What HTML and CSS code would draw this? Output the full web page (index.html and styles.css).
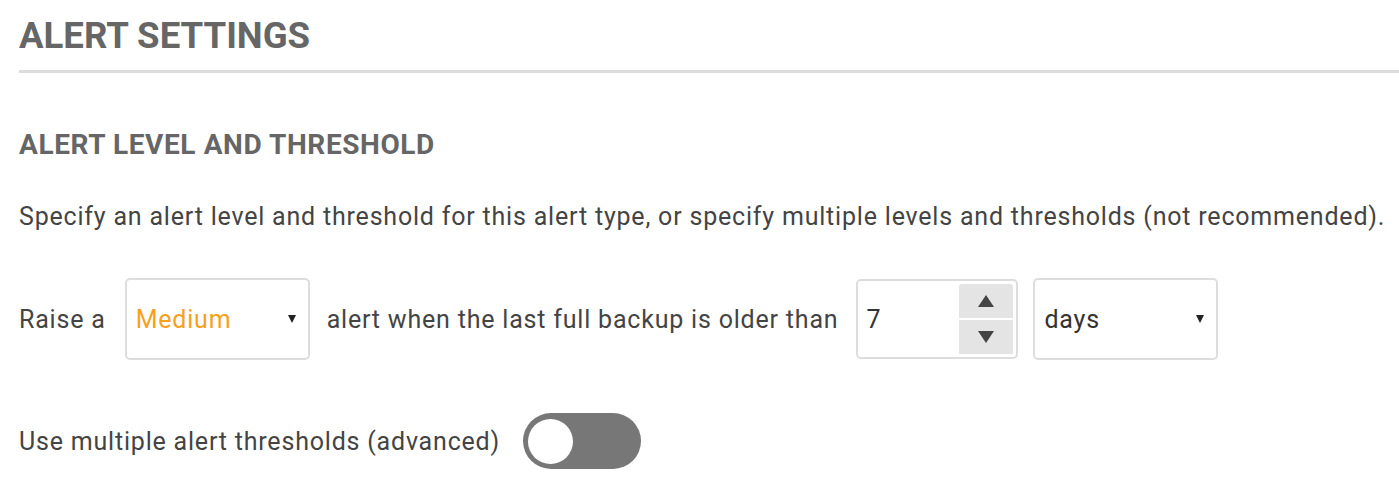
FILE: index.html
```html
<!DOCTYPE html>
<html lang="en">
<head>
<meta charset="utf-8">
<title>Alert Settings</title>
<link rel="stylesheet" href="styles.css">
</head>
<body>
<div class="page">
  <h1 class="title">ALERT SETTINGS</h1>
  <div class="rule"></div>
  <h2 class="subtitle">ALERT LEVEL AND THRESHOLD</h2>
  <p class="desc">Specify an alert level and threshold for this alert type, or specify multiple levels and thresholds (not recommended).</p>
  <div class="row">
    <span class="label">Raise a</span>
    <div class="select select-level">
      <span class="select-value medium">Medium</span>
      <span class="caret"></span>
    </div>
    <span class="label">alert when the last full backup is older than</span>
    <div class="number">
      <span class="number-value">7</span>
      <div class="spinner">
        <div class="spin-btn"><span class="tri-up"></span></div>
        <div class="spin-btn"><span class="tri-down"></span></div>
      </div>
    </div>
    <div class="select select-unit">
      <span class="select-value">days</span>
      <span class="caret"></span>
    </div>
  </div>
  <div class="toggle-row">
    <span class="label">Use multiple alert thresholds (advanced)</span>
    <div class="toggle"><span class="knob"></span></div>
  </div>
</div>
</body>
</html>
```
FILE: styles.css
```css
html, body {
  margin: 0;
  padding: 0;
  background: #ffffff;
}
body {
  font-family: Roboto, "Liberation Sans", Arial, sans-serif;
  color: #444444;
}
.page {
  padding-left: 19px;
}
.title {
  margin: 17px 0 0 0;
  font-size: 36.6px;
  line-height: 38px;
  font-weight: 700;
  color: #666666;
}
.rule {
  margin-top: 15px;
  height: 3px;
  background: #dddddd;
}
.subtitle {
  margin: 58px 0 0 0;
  font-size: 28px;
  line-height: 28px;
  font-weight: 700;
  letter-spacing: 0.6px;
  color: #666666;
}
.desc {
  margin: 45px 0 0 0;
  font-size: 25px;
  line-height: 25px;
  letter-spacing: 0.8px;
  color: #444444;
}
.row {
  margin-top: 49px;
  display: flex;
  align-items: center;
  height: 82px;
}
.label {
  font-size: 25px;
  line-height: 25px;
  letter-spacing: 0.8px;
  color: #444444;
  white-space: nowrap;
}
.select {
  box-sizing: border-box;
  height: 82px;
  width: 185px;
  border: 2px solid #dddddd;
  border-radius: 5px;
  display: flex;
  align-items: center;
  justify-content: space-between;
  padding: 0 12px 0 9px;
  font-size: 25px;
  letter-spacing: 0.8px;
}
.select-level {
  margin: 0 17px 0 19px;
}
.select-unit {
  margin-left: 15px;
}
.select-value {
  color: #333333;
}
.select-value.medium {
  color: #f5a11c;
}
.caret {
  width: 0;
  height: 0;
  border-left: 4px solid transparent;
  border-right: 4px solid transparent;
  border-top: 8px solid #222222;
}
.number {
  box-sizing: border-box;
  margin-left: 18px;
  width: 162px;
  height: 80px;
  border: 2px solid #dddddd;
  border-radius: 5px;
  display: flex;
  align-items: center;
  justify-content: space-between;
  padding: 3px 3px 3px 8px;
  font-size: 25px;
  color: #333333;
}
.spinner {
  align-self: stretch;
  width: 54px;
  display: flex;
  flex-direction: column;
  gap: 2px;
}
.spin-btn {
  flex: 1;
  background: #e4e4e4;
  display: flex;
  align-items: center;
  justify-content: center;
}
.spin-btn:first-child {
  border-radius: 3px 3px 0 0;
}
.tri-up {
  width: 0;
  height: 0;
  border-left: 8px solid transparent;
  border-right: 8px solid transparent;
  border-bottom: 12px solid #444444;
}
.tri-down {
  width: 0;
  height: 0;
  border-left: 8px solid transparent;
  border-right: 8px solid transparent;
  border-top: 12px solid #444444;
}
.toggle-row {
  margin-top: 53px;
  display: flex;
  align-items: center;
}
.toggle {
  margin-left: 23px;
  box-sizing: border-box;
  width: 118px;
  height: 56px;
  border-radius: 28px;
  background: #777777;
  padding: 5px;
  display: flex;
  align-items: center;
}
.knob {
  width: 45px;
  height: 45px;
  border-radius: 50%;
  background: #ffffff;
}
```
